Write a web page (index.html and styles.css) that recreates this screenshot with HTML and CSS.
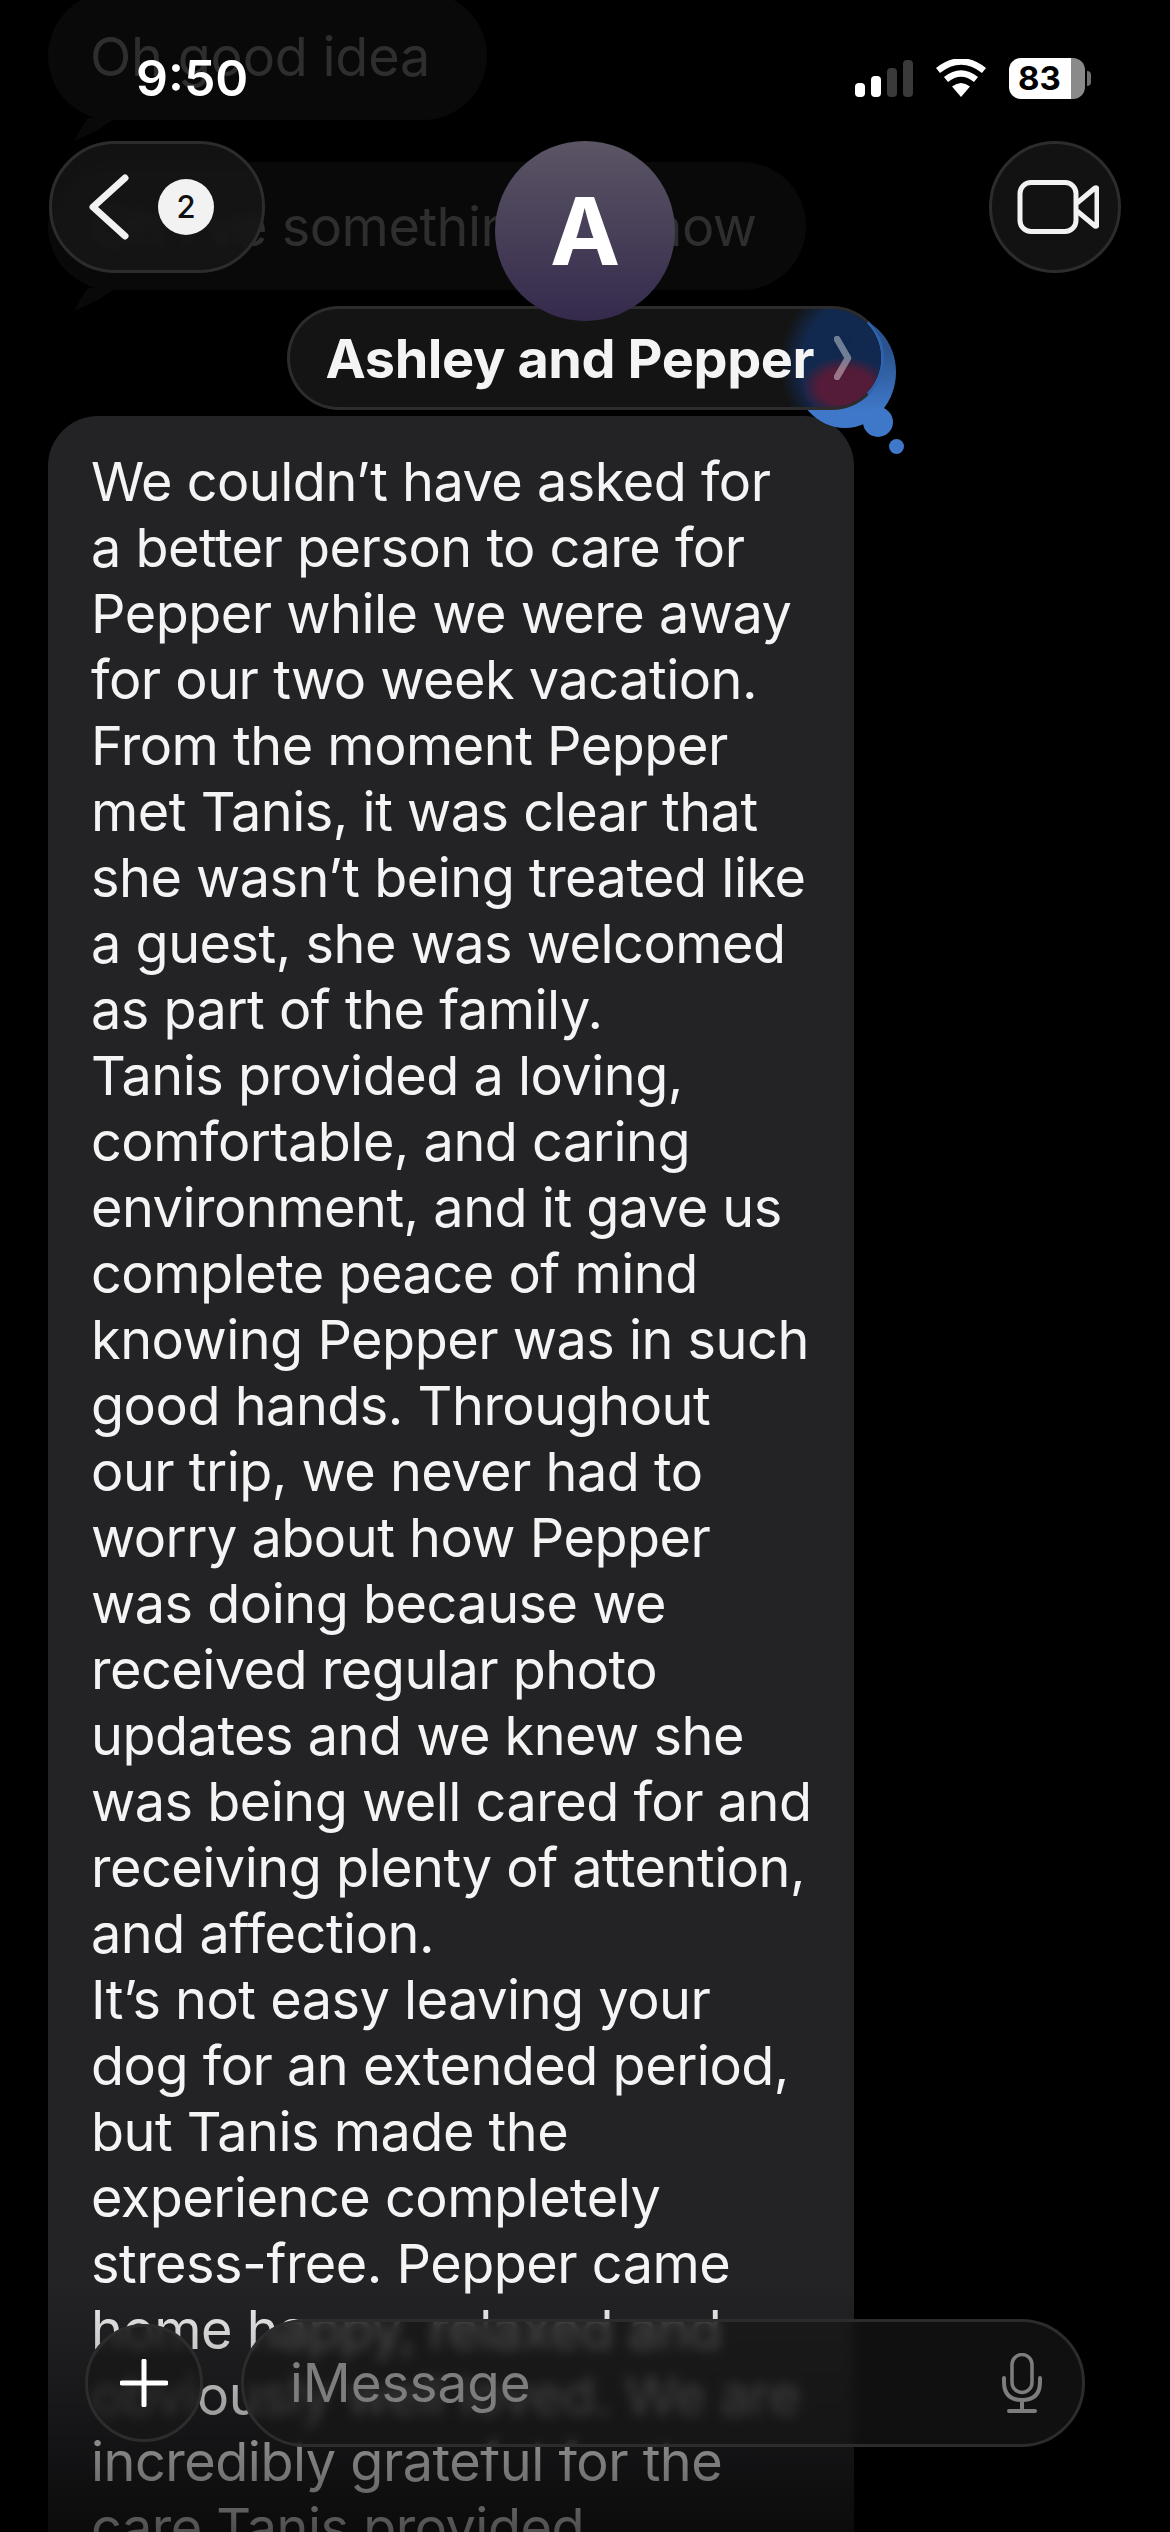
FILE: index.html
```html
<!DOCTYPE html>
<html lang="en">

<head>
    <meta charset="UTF-8">
    <meta name="viewport" content="width=device-width, initial-scale=1.0">
    <title>Ashley and Pepper</title>
    <link rel="stylesheet" href="styles.css">
</head>

<body>
    <main class="thread">
        <div class="old-bubble old-short">Oh good idea</div>
        <div class="old-bubble old-long">Oh I’ve something to show</div>

        <!-- leftover effect bubble behind the name pill -->
        <div class="blob-wrap">
            <span class="blob blob-big"></span>
            <span class="blob blob-red"></span>
            <span class="blob blob-mid"></span>
            <span class="blob blob-dot"></span>
        </div>

        <div class="message">
            We couldn’t have asked for<br>
            a better person to care for<br>
            Pepper while we were away<br>
            for our two week vacation.<br>
            From the moment Pepper<br>
            met Tanis, it was clear that<br>
            she wasn’t being treated like<br>
            a guest, she was welcomed<br>
            as part of the family.<br>
            Tanis provided a loving,<br>
            comfortable, and caring<br>
            environment, and it gave us<br>
            complete peace of mind<br>
            knowing Pepper was in such<br>
            good hands. Throughout<br>
            our trip, we never had to<br>
            worry about how Pepper<br>
            was doing because we<br>
            received regular photo<br>
            updates and we knew she<br>
            was being well cared for and<br>
            receiving plenty of attention,<br>
            and affection.<br>
            It’s not easy leaving your<br>
            dog for an extended period,<br>
            but Tanis made the<br>
            experience completely<br>
            stress-free. Pepper came<br>
            home happy, relaxed and<br>
            obviously well loved. We are<br>
            incredibly grateful for the<br>
            care Tanis provided
        </div>
    </main>

    <header class="top">
        <div class="status">
            <span class="time">9:50</span>
            <div class="status-icons">
                <div class="signal">
                    <i class="bar bar-1"></i>
                    <i class="bar bar-2"></i>
                    <i class="bar bar-3"></i>
                    <i class="bar bar-4"></i>
                </div>
                <svg class="wifi" width="52" height="38" viewBox="0 0 52 38">
                    <path d="M26 38 L17 27.5 Q26 20.5 35 27.5 Z" fill="#fff" />
                    <path d="M11 20.5 Q26 8.5 41 20.5" fill="none" stroke="#fff" stroke-width="6.5" />
                    <path d="M3 11.5 Q26 -6.5 49 11.5" fill="none" stroke="#fff" stroke-width="6.5" />
                </svg>
                <div class="battery">
                    <span class="battery-level">83</span>
                    <i class="battery-nub"></i>
                </div>
            </div>
        </div>

        <nav class="nav">
            <div class="back glass">
                <svg width="42" height="66" viewBox="0 0 42 66">
                    <path d="M37 4 L5 33 L37 62" fill="none" stroke="#f2f2f2" stroke-width="7" stroke-linecap="round" stroke-linejoin="round" />
                </svg>
                <span class="badge">2</span>
            </div>

            <div class="contact">
                <div class="avatar">A</div>
                <div class="name glass">
                    <span class="name-text">Ashley and Pepper</span>
                    <svg class="name-chevron" width="18" height="44" viewBox="0 0 18 44">
                        <path d="M3 3 L14 22 L3 41" fill="none" stroke="#fff" stroke-width="6.5" stroke-linecap="round" stroke-linejoin="round" />
                    </svg>
                </div>
            </div>

            <div class="video glass">
                <svg class="video-icon" width="82" height="54" viewBox="0 0 82 54">
                    <rect x="3" y="2.5" width="56" height="49" rx="11" fill="none" stroke="#f2f2f2" stroke-width="5" />
                    <path d="M60 23 L78 8 Q80 7 80 10 V44 Q80 47 78 46 L60 31" fill="none" stroke="#f2f2f2" stroke-width="5" stroke-linejoin="round" />
                </svg>
            </div>
        </nav>
    </header>

    <div class="fade"></div>

    <footer class="composer">
        <div class="plus glass">
            <svg width="48" height="48" viewBox="0 0 48 48">
                <path d="M24 2 V46 M2 24 H46" stroke="#fff" stroke-width="5" stroke-linecap="round" />
            </svg>
        </div>
        <div class="input glass">
            <span>iMessage</span>
            <svg width="40" height="60" viewBox="0 0 40 60">
                <rect x="10" y="1.5" width="20" height="38" rx="10" fill="none" stroke="#7d7d7d" stroke-width="3.5" />
                <path d="M2 25 V29 Q2 47 20 47 Q38 47 38 29 V25 M20 47 V57 M7 58 H33" fill="none" stroke="#7d7d7d" stroke-width="4" stroke-linecap="round" />
            </svg>
        </div>
    </footer>
</body>

</html>
```

FILE: styles.css
```css
* {
    box-sizing: border-box;
}

body {
    margin: 0;
    height: 2532px;
    overflow: hidden;
    position: relative;
    background: #000;
    color: #f4f4f4;
    font-family: Inter, "Liberation Sans", sans-serif;
}

/* thread */
.thread {
    position: relative;
    margin-top: -8px;
    padding: 0 48px;
}

.old-bubble {
    position: relative;
    width: fit-content;
    height: 128px;
    padding: 0 42px;
    border-radius: 64px;
    background: #09090a;
    color: #2e2e2e;
    font-size: 54px;
    letter-spacing: -0.25px;
    line-height: 130px;
}

.old-bubble::after {
    content: "";
    position: absolute;
    left: 26px;
    bottom: -22px;
    width: 42px;
    height: 24px;
    background: #09090a;
    clip-path: polygon(14px 0, 42px 0, 24px 12px, 0 23px, 6px 12px);
}

.old-short {
    width: 439px;
}

.old-long {
    width: 758px;
    margin-top: 42px;
    padding-left: 44px;
    letter-spacing: -0.5px;
    white-space: nowrap;
}

.message {
    position: relative;
    width: 806px;
    margin-top: 126px;
    padding: 33px 20px 120px 43px;
    border-radius: 50px;
    background: #232326;
    font-size: 54px;
    letter-spacing: -0.5px;
    line-height: 66px;
    white-space: nowrap;
}

.blob-wrap {
    position: absolute;
    z-index: 1;
    top: 0;
    left: 0;
}

.blob {
    position: absolute;
    border-radius: 50%;
    background: #3f78c9;
}

.blob-big {
    left: 794px;
    top: 324px;
    width: 102px;
    height: 112px;
    background: linear-gradient(to bottom, #2a538f 30%, #3f78c9 85%);
}

.blob-red {
    left: 838px;
    top: 395px;
    width: 16px;
    height: 18px;
    background: #b02a5e;
}

.blob-mid {
    left: 863px;
    top: 415px;
    width: 30px;
    height: 30px;
}

.blob-dot {
    left: 889px;
    top: 447px;
    width: 15px;
    height: 15px;
}

/* header */
.top {
    position: absolute;
    z-index: 2;
    top: 0;
    left: 0;
    right: 0;
}

.status {
    display: flex;
    justify-content: space-between;
    align-items: center;
    height: 141px;
    padding: 15px 85px 0 136px;
}

.time {
    font-size: 50px;
    font-weight: 600;
    color: #fff;
}

.status-icons {
    display: flex;
    align-items: center;
    gap: 22px;
}

.signal {
    display: flex;
    align-items: flex-end;
    gap: 6px;
    height: 37px;
}

.bar {
    width: 10px;
    border-radius: 4px;
    background: #fff;
}

.bar-1 {
    height: 14px;
}

.bar-2 {
    height: 21px;
}

.bar-3 {
    height: 29px;
    background: #3a3a3a;
}

.bar-4 {
    height: 37px;
    background: #3a3a3a;
}

.battery {
    position: relative;
    width: 76px;
    height: 41px;
}

.battery-level {
    display: block;
    height: 100%;
    border-radius: 12px;
    background: linear-gradient(to right, #fff 62px, #8a8a8a 62px);
    color: #000;
    font-size: 33px;
    font-weight: 700;
    line-height: 41px;
    padding-left: 9px;
}

.battery-nub {
    position: absolute;
    right: -6px;
    top: 13px;
    width: 4px;
    height: 15px;
    border-radius: 0 4px 4px 0;
    background: #6f6f6f;
}

.nav {
    display: grid;
    grid-template-columns: 1fr auto 1fr;
    align-items: start;
    padding: 0 49px;
}

.glass {
    background: rgba(23, 23, 23, 0.78);
    border: 3px solid #2c2c2c;
    -webkit-backdrop-filter: blur(6px);
    backdrop-filter: blur(6px);
}

.back {
    display: flex;
    align-items: center;
    gap: 28px;
    justify-self: start;
    width: 216px;
    height: 132px;
    padding-left: 36px;
    border-radius: 66px;
}

.badge {
    width: 56px;
    height: 56px;
    border-radius: 50%;
    background: #f2f2f2;
    color: #111;
    font-size: 31px;
    font-weight: 500;
    line-height: 56px;
    text-align: center;
}

.contact {
    display: flex;
    flex-direction: column;
    align-items: center;
}

.avatar {
    position: relative;
    z-index: 1;
    width: 180px;
    height: 180px;
    margin-bottom: -15px;
    border-radius: 50%;
    background: linear-gradient(to bottom, #5b5565, #352a4c);
    color: #fff;
    font-size: 94px;
    font-weight: 700;
    line-height: 180px;
    text-align: center;
}

.name {
    position: relative;
    display: flex;
    align-items: center;
    gap: 20px;
    height: 104px;
    width: 597px;
    padding-left: 36px;
    border-radius: 52px;
    border-right-color: #2f62ad;
    background: #141414;
    font-size: 54px;
    font-weight: 700;
    letter-spacing: -0.4px;
    white-space: nowrap;
    overflow: hidden;
}

/* the blob seen through the pill */
.name::after {
    content: "";
    position: absolute;
    inset: 0;
    background:
        radial-gradient(ellipse 44px 30px at 555px 78px, #541c38 60%, rgba(84, 28, 56, 0) 100%),
        radial-gradient(ellipse 90px 90px at 580px 55px, #12294f 75%, rgba(18, 41, 79, 0) 100%);
}

.name-text,
.name-chevron {
    position: relative;
    z-index: 1;
}

.name-chevron {
    opacity: 0.4;
}

.video {
    display: flex;
    align-items: center;
    justify-content: center;
    justify-self: end;
    width: 132px;
    height: 132px;
    border-radius: 50%;
}

.video-icon {
    margin-left: 5px;
}

/* bottom */
.fade {
    position: absolute;
    z-index: 2;
    left: 0;
    right: 0;
    bottom: 0;
    height: 250px;
    background: linear-gradient(to bottom, rgba(0, 0, 0, 0), rgba(0, 0, 0, 0.68));
}

.composer {
    position: absolute;
    z-index: 3;
    left: 85px;
    top: 2319px;
    display: flex;
    align-items: center;
    gap: 38px;
}

.plus {
    display: flex;
    align-items: center;
    justify-content: center;
    width: 118px;
    height: 118px;
    border-radius: 50%;
}

.input {
    display: flex;
    align-items: center;
    justify-content: space-between;
    width: 844px;
    height: 128px;
    padding: 0 40px 0 46px;
    border-radius: 64px;
    background: rgba(23, 23, 23, 0.7);
    color: #7d7d7d;
    font-size: 53px;
}
```
